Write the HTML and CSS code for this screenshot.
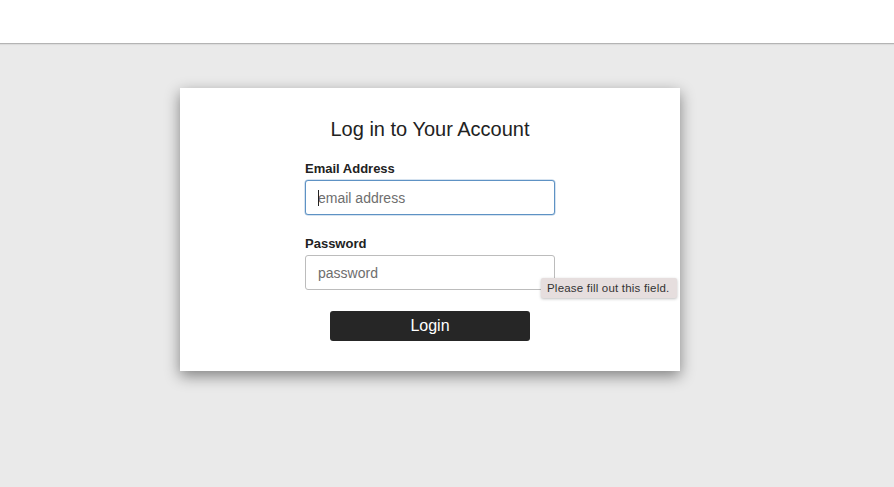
FILE: index.html
```
<!DOCTYPE html>
<html>
<head>
<meta charset="utf-8">
<link rel="stylesheet" href="styles.css">
</head>
<body>
<header class="topbar"></header>
<main class="page">
  <section class="card">
    <h1 class="title">Log in to Your Account</h1>
    <form class="form">
      <label class="label" for="email">Email Address</label>
      <div class="field">
        <input class="input input-focus" id="email" type="text" placeholder="email address">
        <span class="caret"></span>
      </div>
      <label class="label label-gap" for="pw">Password</label>
      <div class="field">
        <input class="input" id="pw" type="password" placeholder="password">
        <div class="tooltip">Please fill out this field.</div>
      </div>
      <button class="btn" type="button">Login</button>
    </form>
  </section>
</main>
</body>
</html>
```
FILE: styles.css
```
html, body {
  margin: 0;
  padding: 0;
  height: 100%;
}
body {
  font-family: "Liberation Sans", Arial, sans-serif;
  background: #eaeaea;
  color: #222;
}
.topbar {
  height: 43px;
  background: #fff;
  border-bottom: 1px solid #b4b4b4;
  box-shadow: 0 1px 1px rgba(0,0,0,0.06);
}
.page {
  padding-top: 44px;
  padding-left: 180px;
}
.card {
  width: 500px;
  box-sizing: border-box;
  background: #fff;
  padding: 29px 0 30px;
  box-shadow: 0 5px 14px rgba(0,0,0,0.45);
}
.title {
  margin: 0;
  font-size: 20px;
  line-height: 24px;
  font-weight: normal;
  text-align: center;
  color: #222;
}
.form {
  width: 250px;
  margin: 20px auto 0;
  display: flex;
  flex-direction: column;
}
.label {
  font-size: 13px;
  line-height: 16px;
  font-weight: bold;
  color: #222;
  margin-bottom: 3px;
}
.label-gap {
  margin-top: 21px;
}
.field {
  position: relative;
  height: 35px;
}
.input {
  width: 250px;
  height: 35px;
  box-sizing: border-box;
  border: 1px solid #bcbcbc;
  border-radius: 3px;
  padding: 0 12px;
  font-family: "Liberation Sans", Arial, sans-serif;
  font-size: 14px;
  color: #333;
  background: #fff;
  outline: none;
  margin: 0;
}
.input::placeholder {
  color: #6e6e6e;
}
.input-focus {
  border-color: #5e92c4;
  box-shadow: 0 0 0 0.5px rgba(94,146,196,0.5);
}
.caret {
  position: absolute;
  left: 13px;
  top: 10px;
  width: 1px;
  height: 16px;
  background: #222;
}
.tooltip {
  position: absolute;
  left: 236px;
  top: 23px;
  height: 20px;
  line-height: 20px;
  padding: 0 8px 0 6px;
  font-size: 11.5px;
  letter-spacing: 0.2px;
  color: #333;
  background: #e6dede;
  border-radius: 2px;
  white-space: nowrap;
  box-shadow: 0 1px 3px rgba(0,0,0,0.25);
}
.btn {
  align-self: center;
  width: 200px;
  height: 30px;
  margin-top: 21px;
  border: none;
  border-radius: 3px;
  background: #262626;
  color: #fff;
  font-family: "Liberation Sans", Arial, sans-serif;
  font-size: 16px;
  padding: 0;
}
```
